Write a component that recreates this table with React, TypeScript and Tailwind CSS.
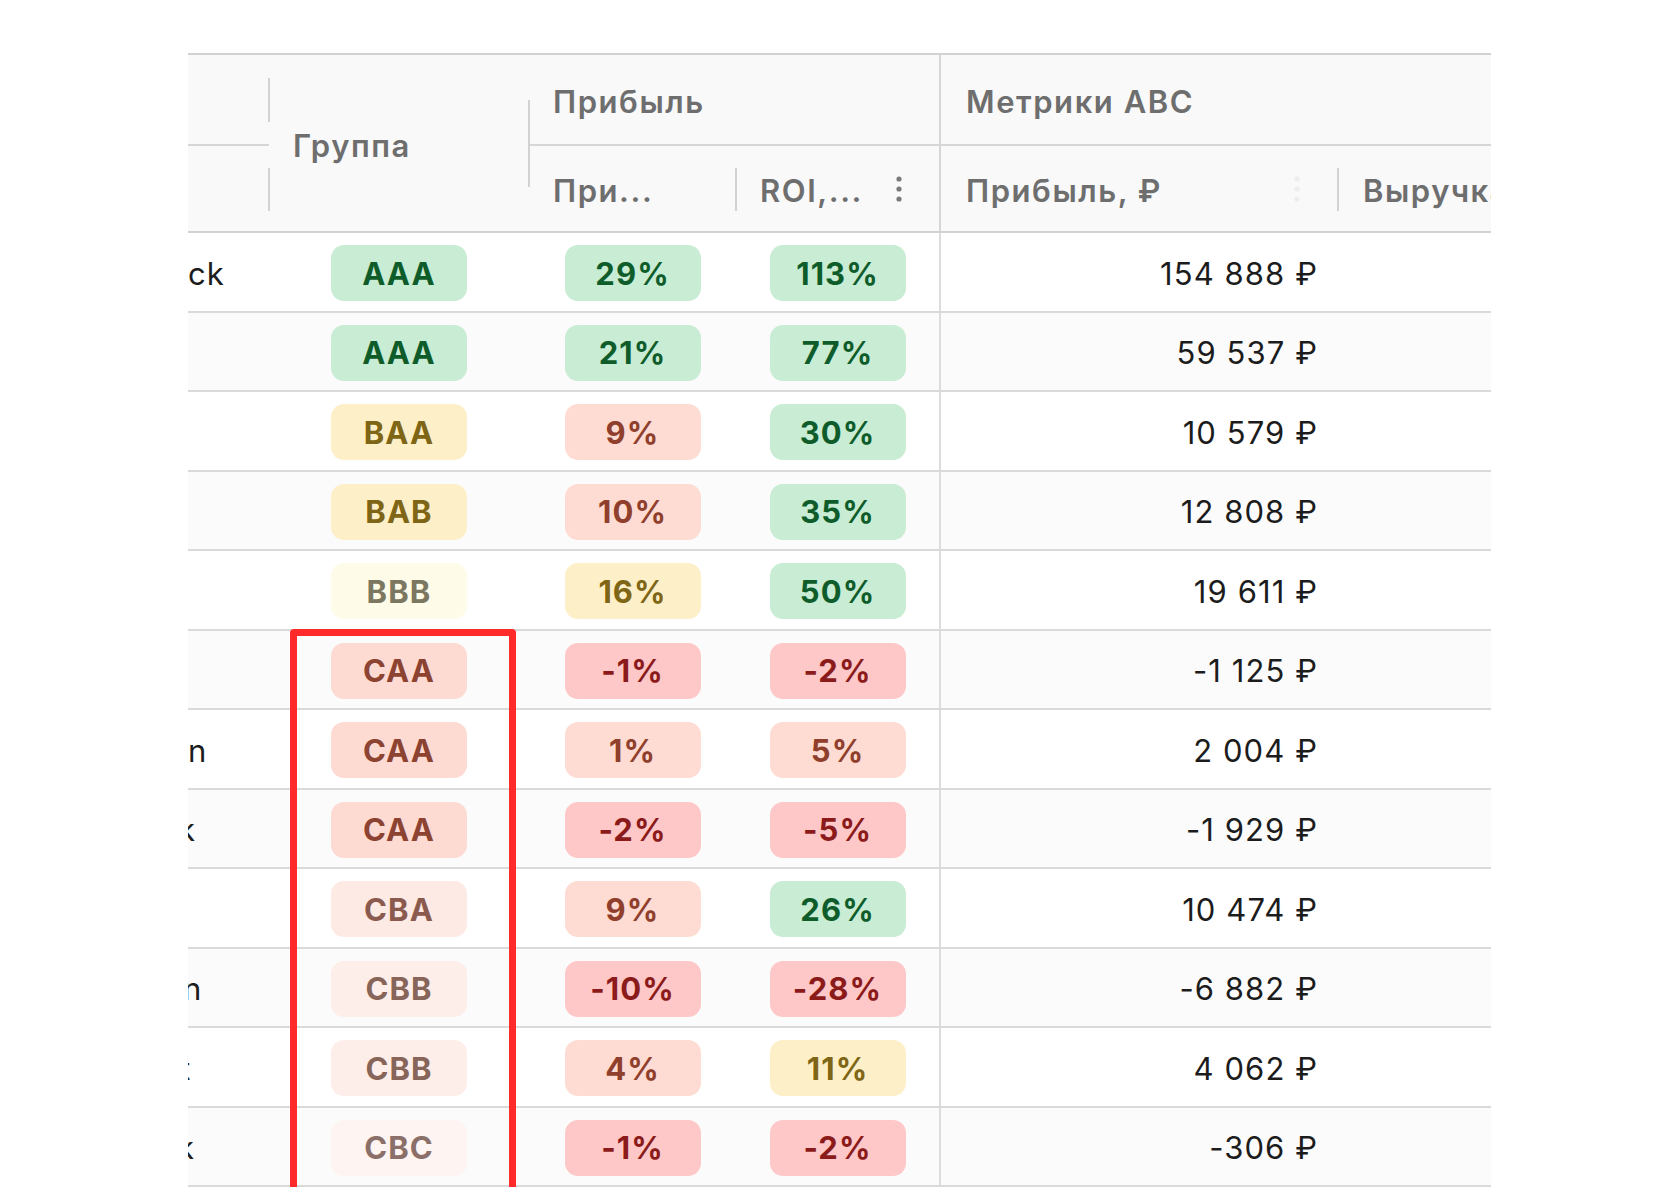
import React from "react";

type Tone =
  | "green"
  | "yellow"
  | "pale"
  | "salmon"
  | "red"
  | "caa"
  | "cba"
  | "cbb"
  | "cbc";

const TONES: Record<Tone, string> = {
  green: "bg-[#c8ecd4] text-[#0f5c2b]",
  yellow: "bg-[#fdf0c8] text-[#7f6516]",
  pale: "bg-[#fefce9] text-[#7c7760]",
  salmon: "bg-[#fedcd3] text-[#8f3f2c]",
  red: "bg-[#fec8c8] text-[#8b1b1b]",
  caa: "bg-[#fddbd3] text-[#8c4332]",
  cba: "bg-[#fdeae4] text-[#8a5a4e]",
  cbb: "bg-[#feeee9] text-[#876559]",
  cbc: "bg-[#fef4f1] text-[#8a7069]",
};

type Cell = { text: string; tone: Tone };

type Row = {
  name: string;
  shift: string;
  group: Cell;
  margin: Cell;
  roi: Cell;
  profit: string;
};

// name column is scrolled off to the left, only the tail is visible
const ROWS: Row[] = [
  { name: "ck", shift: "ml-0", group: { text: "AAA", tone: "green" }, margin: { text: "29%", tone: "green" }, roi: { text: "113%", tone: "green" }, profit: "154 888 ₽" },
  { name: "l", shift: "-ml-[7px]", group: { text: "AAA", tone: "green" }, margin: { text: "21%", tone: "green" }, roi: { text: "77%", tone: "green" }, profit: "59 537 ₽" },
  { name: "", shift: "ml-0", group: { text: "BAA", tone: "yellow" }, margin: { text: "9%", tone: "salmon" }, roi: { text: "30%", tone: "green" }, profit: "10 579 ₽" },
  { name: "", shift: "ml-0", group: { text: "BAB", tone: "yellow" }, margin: { text: "10%", tone: "salmon" }, roi: { text: "35%", tone: "green" }, profit: "12 808 ₽" },
  { name: "", shift: "ml-0", group: { text: "BBB", tone: "pale" }, margin: { text: "16%", tone: "yellow" }, roi: { text: "50%", tone: "green" }, profit: "19 611 ₽" },
  { name: "", shift: "ml-0", group: { text: "CAA", tone: "caa" }, margin: { text: "-1%", tone: "red" }, roi: { text: "-2%", tone: "red" }, profit: "-1 125 ₽" },
  { name: "n", shift: "ml-0", group: { text: "CAA", tone: "caa" }, margin: { text: "1%", tone: "salmon" }, roi: { text: "5%", tone: "salmon" }, profit: "2 004 ₽" },
  { name: "k", shift: "-ml-[10px]", group: { text: "CAA", tone: "caa" }, margin: { text: "-2%", tone: "red" }, roi: { text: "-5%", tone: "red" }, profit: "-1 929 ₽" },
  { name: "", shift: "ml-0", group: { text: "CBA", tone: "cba" }, margin: { text: "9%", tone: "salmon" }, roi: { text: "26%", tone: "green" }, profit: "10 474 ₽" },
  { name: "n", shift: "-ml-[5px]", group: { text: "CBB", tone: "cbb" }, margin: { text: "-10%", tone: "red" }, roi: { text: "-28%", tone: "red" }, profit: "-6 882 ₽" },
  { name: "t", shift: "-ml-[8px]", group: { text: "CBB", tone: "cbb" }, margin: { text: "4%", tone: "salmon" }, roi: { text: "11%", tone: "yellow" }, profit: "4 062 ₽" },
  { name: "k", shift: "-ml-[11px]", group: { text: "CBC", tone: "cbc" }, margin: { text: "-1%", tone: "red" }, roi: { text: "-2%", tone: "red" }, profit: "-306 ₽" },
];

const COLS = "grid-cols-[81px_260px_207px_205px_397px_220px]";

// ── Small pieces ─────────────────────────────────────────────────────────────
const Badge = ({ cell }: { cell: Cell }) => (
  <span
    className={`flex h-[56px] w-[136px] items-center justify-center rounded-[13px] text-[31px] font-bold leading-none tracking-[0.035em] ${TONES[cell.tone]}`}
  >
    {cell.text}
  </span>
);

const Kebab = ({ faint }: { faint?: boolean }) => (
  <svg
    width="6"
    height="26"
    viewBox="0 0 6 26"
    className={faint ? "fill-[#eeeeee]" : "fill-[#7a7a7a]"}
  >
    <circle cx="3" cy="3" r="2.6" />
    <circle cx="3" cy="13" r="2.6" />
    <circle cx="3" cy="23" r="2.6" />
  </svg>
);

// resize handle sitting on the right edge of a header cell
const Handle = ({ top, height }: { top: string; height: string }) => (
  <span
    className={`absolute right-[-1px] w-[2px] bg-[#d2d2d2] ${top} ${height}`}
  />
);

const HeadText = ({ children }: { children: React.ReactNode }) => (
  <span className="whitespace-nowrap pt-[4px] text-[31px] font-semibold leading-none tracking-[0.05em] text-[#6e6e6e]">
    {children}
  </span>
);

// ── Header ───────────────────────────────────────────────────────────────────
const Header = () => (
  <div
    className={`grid ${COLS} grid-rows-[91px_85px] border-y-2 border-[#d2d2d2] bg-[#f9f9f9]`}
  >
    {/* scrolled-off group column */}
    <div className="relative col-start-1 row-start-1 border-b-2 border-[#d6d6d6]">
      <Handle top="top-[23px]" height="h-[44px]" />
    </div>
    <div className="relative col-start-1 row-start-2">
      <Handle top="top-[22px]" height="h-[43px]" />
    </div>

    <div className="relative col-start-2 row-span-2 row-start-1 flex items-center pl-[24px]">
      <HeadText>Группа</HeadText>
      <Handle top="top-[45px]" height="h-[87px]" />
    </div>

    <div className="col-span-2 col-start-3 row-start-1 flex items-center border-b-2 border-r-2 border-[#d6d6d6] pl-[24px]">
      <HeadText>Прибыль</HeadText>
    </div>
    <div className="relative col-start-3 row-start-2 flex items-center pl-[24px]">
      <HeadText>При...</HeadText>
      <Handle top="top-[22px]" height="h-[43px]" />
    </div>
    <div className="col-start-4 row-start-2 flex items-center justify-between border-r-2 border-[#d6d6d6] pl-[24px] pr-[37px]">
      <HeadText>ROI,...</HeadText>
      <Kebab />
    </div>

    <div className="col-span-2 col-start-5 row-start-1 flex items-center border-b-2 border-[#d6d6d6] pl-[25px]">
      <HeadText>Метрики ABC</HeadText>
    </div>
    <div className="relative col-start-5 row-start-2 flex items-center justify-between pl-[25px] pr-[38px]">
      <HeadText>Прибыль, ₽</HeadText>
      <Kebab faint />
      <Handle top="top-[22px]" height="h-[43px]" />
    </div>
    <div className="col-start-6 row-start-2 flex items-center overflow-hidden pl-[25px]">
      <HeadText>Выручка, ₽</HeadText>
    </div>
  </div>
);

// ── Body row ─────────────────────────────────────────────────────────────────
const BodyRow = ({ row, index }: { row: Row; index: number }) => (
  <div
    className={`grid ${COLS} h-[79.5px] border-b-2 border-[#dadada] pt-[3px] ${
      index % 2 === 1 ? "bg-[#fbfbfb]" : "bg-white"
    }`}
  >
    <div className="flex items-center overflow-hidden">
      <span
        className={`whitespace-nowrap text-[31px] leading-none tracking-[0.03em] text-[#1c1c1c] ${row.shift}`}
      >
        {row.name}
      </span>
    </div>
    <div className="flex items-center justify-center">
      <Badge cell={row.group} />
    </div>
    <div className="flex items-center justify-center">
      <Badge cell={row.margin} />
    </div>
    <div className="-mt-[3px] flex items-center justify-center border-r-2 border-[#dcdcdc] pt-[3px]">
      <Badge cell={row.roi} />
    </div>
    <div className="flex items-center justify-end pr-[20px]">
      <span className="whitespace-nowrap text-[31px] leading-none tracking-[0.035em] text-[#1c1c1c]">
        {row.profit}
      </span>
    </div>
    <div />
  </div>
);

// ── Page ─────────────────────────────────────────────────────────────────────
export default function App() {
  return (
    <div className="min-h-screen bg-white pl-[188px] pt-[53px] font-['Inter',sans-serif]">
      <div className="relative h-[1134px] w-[1303px] overflow-hidden">
        <Header />
        {ROWS.map((row, i) => (
          <BodyRow key={i} row={row} index={i} />
        ))}

        {/* annotation frame over the group column */}
        <div className="absolute left-[102px] top-[576px] h-[600px] w-[226px] rounded-[4px] border-[7px] border-[#ff2a2a]" />
      </div>
    </div>
  );
}
